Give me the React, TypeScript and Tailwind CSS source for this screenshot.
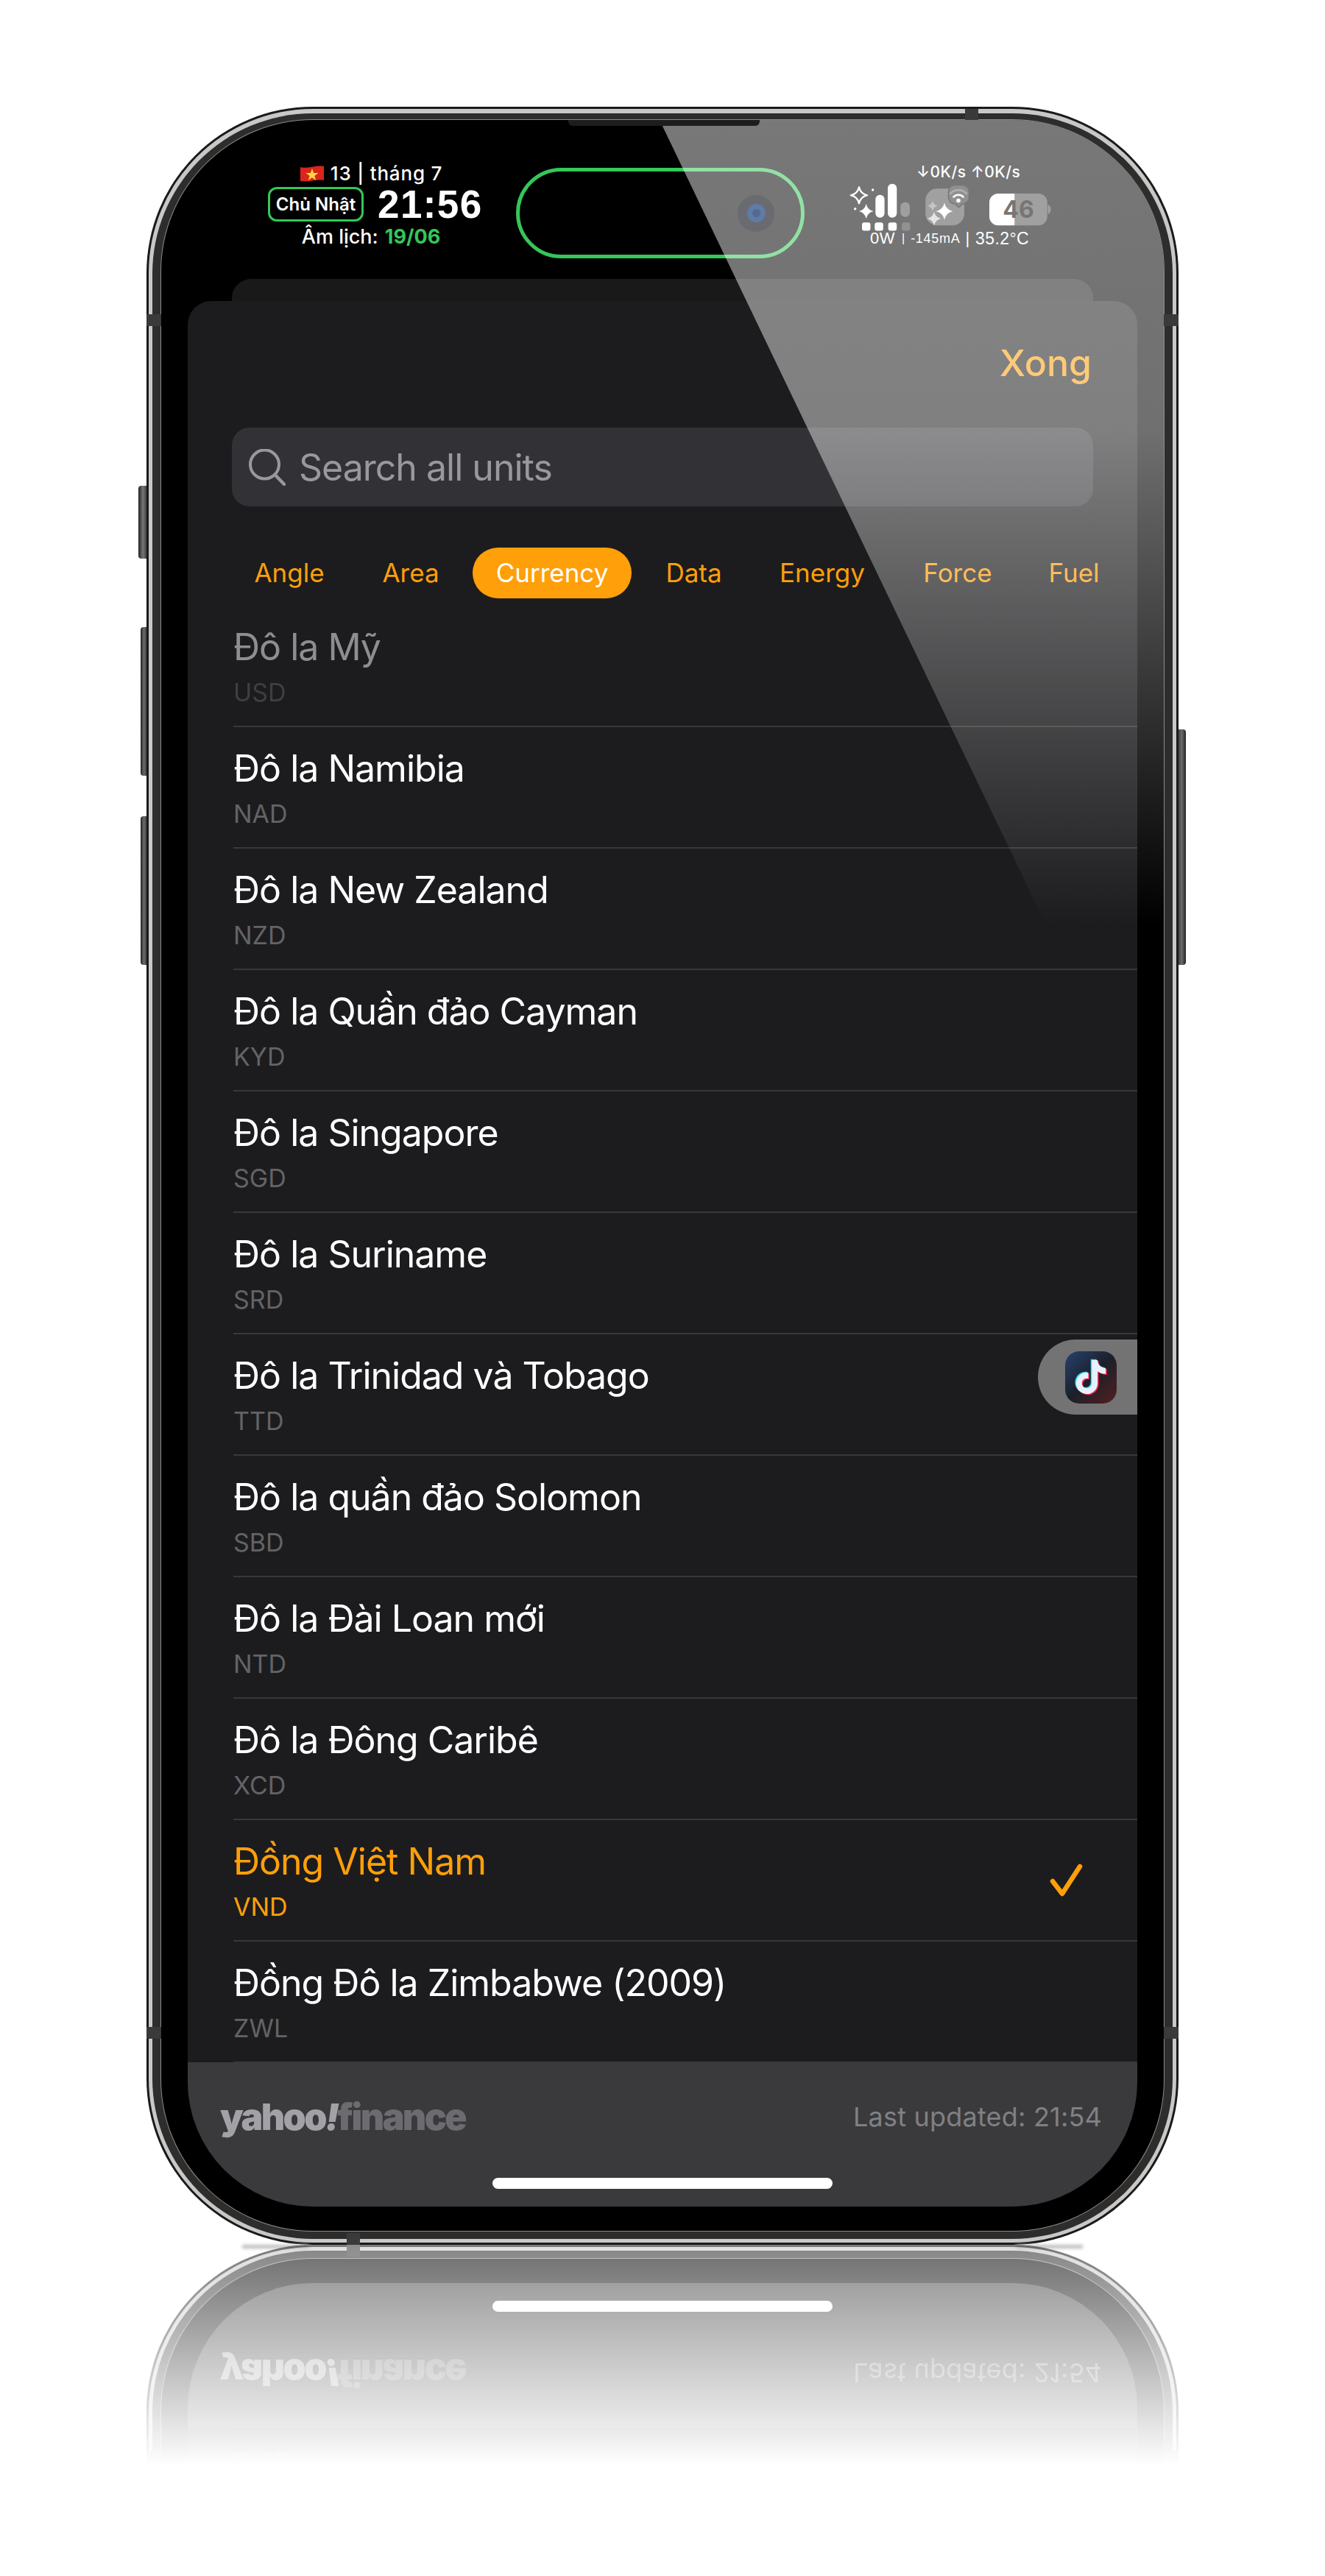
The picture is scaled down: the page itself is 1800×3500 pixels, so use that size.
const star = (cx: number, cy: number, r: number) => {
  const k = r * 0.18;
  return `M${cx} ${cy - r}Q${cx + k} ${cy - k} ${cx + r} ${cy}Q${cx + k} ${cy + k} ${cx} ${cy + r}Q${cx - k} ${cy + k} ${cx - r} ${cy}Q${cx - k} ${cy - k} ${cx} ${cy - r}Z`;
};

const tiktok =
  'M448,209.91a210.06,210.06,0,0,1-122.77-39.25V349.38A162.55,162.55,0,1,1,185,188.31V278.2a74.62,74.62,0,1,0,52.23,71.18V0l88,0a121.18,121.18,0,0,0,1.86,22.17h0A122.18,122.18,0,0,0,381,102.39a121.43,121.43,0,0,0,67,20.14Z';

const tabs = [
  { label: 'Angle', cls: 'w-[160px]' },
  { label: 'Area', cls: 'ml-[15px] w-[140px]' },
  { label: 'Currency', cls: 'ml-[14px] w-[216px] rounded-full bg-[#ff9f0a] text-white' },
  { label: 'Data', cls: 'ml-[17px] w-[135px]' },
  { label: 'Energy', cls: 'ml-[22px] w-[170px]' },
  { label: 'Force', cls: 'ml-[29px] w-[140px]' },
  { label: 'Fuel', cls: 'ml-[38px] w-[100px]' },
];

const units = [
  ['Đô la Mỹ', 'USD'],
  ['Đô la Namibia', 'NAD'],
  ['Đô la New Zealand', 'NZD'],
  ['Đô la Quần đảo Cayman', 'KYD'],
  ['Đô la Singapore', 'SGD'],
  ['Đô la Suriname', 'SRD'],
  ['Đô la Trinidad và Tobago', 'TTD'],
  ['Đô la quần đảo Solomon', 'SBD'],
  ['Đô la Đài Loan mới', 'NTD'],
  ['Đô la Đông Caribê', 'XCD'],
  ['Đồng Việt Nam', 'VND'],
  ['Đồng Đô la Zimbabwe (2009)', 'ZWL'],
];

function StatusIcons() {
  return (
    <svg width="280" height="66" viewBox="0 0 280 66" className="block">
      <path d={star(17, 17.3, 11)} fill="none" stroke="#fff" strokeWidth="2.4" strokeLinejoin="round" />
      <path d={star(26.7, 39, 10)} fill="#fff" />
      <circle cx="35.7" cy="10" r="1.7" fill="#fff" />
      <circle cx="11.7" cy="35.7" r="1.7" fill="#fff" />
      <rect x="39.3" y="16.7" width="12.3" height="31" rx="6" fill="#fff" />
      <rect x="56" y="1.7" width="12.3" height="46" rx="6" fill="#fff" />
      <rect x="73.3" y="26.7" width="12.7" height="20" rx="6" fill="#fff" fillOpacity=".3" />
      <rect x="21" y="54.3" width="11.5" height="11.3" rx="3" fill="#fff" />
      <rect x="38.3" y="54.3" width="11.5" height="11.3" rx="3" fill="#fff" />
      <rect x="56.7" y="54.3" width="11.5" height="11.3" rx="3" fill="#fff" />
      <rect x="75" y="54.3" width="11.5" height="11.3" rx="3" fill="#fff" fillOpacity=".2" />

      <rect x="107.3" y="8.3" width="52.7" height="50" rx="16" fill="#fff" fillOpacity=".31" />
      <path d={star(117, 31.7, 7)} fill="#fff" fillOpacity=".4" />
      <path d={star(133, 39, 11.5)} fill="#fff" />
      <path d={star(119, 49, 9.5)} fill="#fff" fillOpacity=".72" />
      <path
        d="M147 3.5h9c6.5 0 10.5 4 10.5 10.5v5c0 6-3.5 9.5-9 10.2l-5 4.6-5-4.6c-5.5-.7-9-4.2-9-10.2v-5c0-6.5 2-10.5 8.5-10.5z"
        fill="#303030"
        stroke="#000"
        strokeWidth="1.5"
      />
      <path d="M141 15a15 15 0 0 1 22 0" fill="none" stroke="#fff" strokeOpacity=".3" strokeWidth="2.6" strokeLinecap="round" />
      <path d="M145.5 19.5a9 9 0 0 1 13 0" fill="none" stroke="#fff" strokeWidth="2.6" strokeLinecap="round" />
      <circle cx="152" cy="24.5" r="2.8" fill="#fff" />

      <path d="M228.3 15H260.7A12 12 0 0 1 272.7 27V46.3A12 12 0 0 1 260.7 58.3H228.3Z" fill="#fff" fillOpacity=".31" />
      <path d="M206 15H228.3V58.3H206A12 12 0 0 1 194 46.3V27A12 12 0 0 1 206 15Z" fill="#fff" />
      <path d="M273.5 30c3 1 4 3.5 4 6.5s-1 5.5-4 6.5z" fill="#fff" fillOpacity=".3" />
      <text x="233.5" y="48" textAnchor="middle" fontSize="32" fontWeight="700" fill="#000" fontFamily="Inter, sans-serif">
        46
      </text>
    </svg>
  );
}

function StatusBar() {
  return (
    <div className="flex h-[216px] shrink-0 items-start pl-[145px] text-white">
      <div className="flex w-[290px] flex-col items-center pt-[59px]">
        <div className="flex h-[28px] items-center gap-[8px] pr-[10px] text-[26px] leading-[28px] font-medium tracking-[0.8px]">
          <svg width="34" height="24" viewBox="0 0 34 24">
            <path d="M1 3c10 3 20-3 32-1v19c-11-2-21 3-32 1z" fill="#da251d" />
            <path d="M17 5l2.1 6.1h6.4l-5.2 3.8 2 6.1-5.3-3.8-5.3 3.8 2-6.1-5.2-3.8h6.4z" fill="#ffd83a" />
          </svg>
          <span>13 | tháng 7</span>
        </div>
        <div className="mt-[4px] flex items-center gap-[19px]">
          <div className="flex h-[47px] w-[130px] items-center justify-center rounded-[12px] border-[3px] border-[#34c759] text-[24px] font-semibold whitespace-nowrap">
            Chủ Nhật
          </div>
          <div className="w-[141px] text-[53px] leading-[47px] font-bold tracking-[1.4px] [font-family:'Liberation_Sans',Arial,sans-serif]">21:56</div>
        </div>
        <div className="mt-[6px] flex h-[30px] items-center gap-[9px] pr-[10px] text-[27px] font-medium">
          <span>Âm lịch:</span>
          <span className="font-bold text-[#34c759]">19/06</span>
        </div>
      </div>
      <div className="mt-[65px] ml-[47px] flex h-[123px] w-[392px] items-center justify-end rounded-full border-[5px] border-[#34c759] bg-black pr-[36px]">
        <div className="relative z-10 flex h-[50px] w-[50px] items-center justify-center rounded-full bg-[#696b70]">
          <div className="h-[25px] w-[25px] rounded-full border-[7px] border-[#5f7ba8] bg-[#54698f]" />
        </div>
      </div>
      <div className="ml-[57px] flex w-[280px] flex-col pt-[57px]">
        <div className="pl-[95px] text-[21px] leading-[28px] font-medium tracking-[0.5px] whitespace-nowrap">↓0K/s ↑0K/s</div>
        <StatusIcons />
        <div className="mt-[-1px] flex items-center pl-[32px] leading-[22px] font-medium whitespace-nowrap [font-family:'Liberation_Sans',Arial,sans-serif]">
          <span className="text-[22px] tracking-[0.5px]">0W</span>
          <span className="ml-[9px] text-[16px]">|</span>
          <span className="ml-[8px] text-[18px] tracking-[0.7px]">-145mA</span>
          <span className="ml-[7px] text-[22px]">|</span>
          <span className="ml-[8px] text-[23px] tracking-[0.4px]">35.2°C</span>
        </div>
      </div>
    </div>
  );
}

function Footer() {
  return (
    <div className="flex h-[196px] shrink-0 flex-col bg-[#3a3a3c]">
      <div className="flex items-center justify-between pt-[44px] pr-[48px] pl-[44px]">
        <div className="text-[50px] leading-[60px] font-black tracking-[-2.6px]">
          <span className="text-[#a1a1a6]">yahoo</span>
          <span className="text-[#a1a1a6] italic">!</span>
          <span className="text-[#6c6c70]">finance</span>
        </div>
        <div className="text-[36px] leading-[60px] tracking-[0.2px] text-[#808084]">Last updated: 21:54</div>
      </div>
      <div className="mx-auto mt-[53px] h-[15px] w-[462px] rounded-full bg-white" />
    </div>
  );
}

function Card() {
  return (
    <div className="relative mr-[36px] mb-[33px] ml-[36px] flex min-h-0 flex-1 flex-col overflow-hidden rounded-t-[32px] rounded-b-[170px] bg-[#1c1c1e]">
      <div className="flex h-[172px] shrink-0 justify-end pt-[54px] pr-[62px] text-[50px] leading-[60px] font-medium text-[#ff9f0a]">Xong</div>
      <div className="mx-[60px] flex h-[107px] shrink-0 items-center rounded-[24px] bg-[#323236] pl-[23px] text-[#98989e]">
        <svg width="50" height="50" viewBox="0 0 50 50" className="shrink-0">
          <circle cx="21.5" cy="21" r="19.5" fill="none" stroke="currentColor" strokeWidth="4" />
          <path d="M35.5 35l12.5 13" fill="none" stroke="currentColor" strokeWidth="4.5" strokeLinecap="round" />
        </svg>
        <span className="ml-[18px] text-[50px] leading-[60px] tracking-[-1px]">Search all units</span>
      </div>
      <div className="mt-[56px] ml-[58px] flex h-[69px] shrink-0 text-[#ff9f0a]">
        {tabs.map((t) => (
          <div key={t.label} className={`flex items-center justify-center text-[35px] ${t.cls}`}>
            {t.label}
          </div>
        ))}
      </div>
      <div className="mt-[10px] min-h-0 flex-1 overflow-hidden pl-[62px]">
        {units.map(([name, code], i) => {
          const selected = code === 'VND';
          return (
            <div key={code} className="flex h-[165px] items-center justify-between border-b-2 border-[#38383a] pr-[73px]">
              <div className={i === 0 ? 'opacity-50' : ''}>
                <div className={`text-[50px] leading-[60px] tracking-[-1px] ${selected ? 'text-[#ff9f0a]' : 'text-white'}`}>{name}</div>
                <div className={`mt-[12px] text-[34px] leading-[40px] ${selected ? 'text-[#ff9f0a]' : 'text-[#636366]'}`}>{code}</div>
              </div>
              {selected && (
                <svg width="46" height="46" viewBox="0 0 46 46">
                  <path d="M4 24L17 41 41 4" fill="none" stroke="#ff9f0a" strokeWidth="6.5" strokeLinecap="round" strokeLinejoin="round" />
                </svg>
              )}
            </div>
          );
        })}
      </div>
      <Footer />
      {/* assistive touch tab */}
      <div className="absolute top-[1411px] right-0 flex h-[102px] w-[135px] items-center rounded-l-[51px] bg-[#737373] pl-[37px]">
        <div className="flex h-[71px] w-[70px] items-center justify-center rounded-[19px] bg-[linear-gradient(135deg,#27436f_0%,#1c1f2a_50%,#52201f_100%)]">
          <svg width="44" height="50" viewBox="-20 -20 488 552">
            <path d={tiktok} fill="#2fdcf0" transform="translate(-16,-12)" />
            <path d={tiktok} fill="#f2214f" transform="translate(16,14)" />
            <path d={tiktok} fill="#e6f1fb" />
          </svg>
        </div>
      </div>
    </div>
  );
}

function Phone() {
  return (
    <div className="relative h-[2905px] w-[1402px] rounded-[226px] bg-[#1a1a1a] p-[3px]">
      <div className="h-full rounded-[223px] bg-[#c8c8c8] px-[5px] pt-[6px] pb-[5px]">
        <div className="h-full rounded-[218px] bg-[#2e2d2c] px-[11px] pt-[8px] pb-[10px]">
          <div className="h-full rounded-[207px] bg-[#8c8c8c] p-[1px]">
            <div className="relative flex h-full flex-col overflow-hidden rounded-[206px] bg-black">
              <StatusBar />
              <div className="mx-[96px] h-[30px] shrink-0 rounded-t-[26px] bg-[#19191a]" />
              <Card />
              {/* diagonal glare */}
              <div className="pointer-events-none absolute inset-0 bg-[linear-gradient(to_bottom,rgba(255,255,255,0.47)_0px,rgba(255,255,255,0.44)_420px,rgba(255,255,255,0)_1095px)] [clip-path:polygon(677px_0px,1400px_0px,1400px_1100px,1205px_1100px)]" />
              <div className="absolute top-0 left-[553px] h-[8px] w-[260px] rounded-b-[6px] bg-[#1d1d1d]" />
            </div>
          </div>
        </div>
      </div>
      {/* antenna bands */}
      <div className="absolute top-[3px] left-[1112px] h-[15px] w-[18px] bg-[#3a3a3a]" />
      <div className="absolute bottom-0 left-[272px] h-[16px] w-[18px] bg-[#3a3a3a]" />
      <div className="absolute top-[282px] left-0 h-[16px] w-[20px] bg-[#3a3a3a]" />
      <div className="absolute top-[282px] right-0 h-[16px] w-[20px] bg-[#3a3a3a]" />
      <div className="absolute bottom-[280px] left-0 h-[16px] w-[20px] bg-[#3a3a3a]" />
      <div className="absolute right-0 bottom-[280px] h-[16px] w-[20px] bg-[#3a3a3a]" />
      {/* side buttons */}
      <div className="absolute top-[515px] -left-[11px] h-[99px] w-[11px] rounded-l-[4px] bg-[linear-gradient(to_right,#222,#777_55%,#444)]" />
      <div className="absolute top-[707px] -left-[8px] h-[202px] w-[8px] rounded-l-[4px] bg-[linear-gradient(to_right,#222,#6a6a6a_55%,#444)]" />
      <div className="absolute top-[964px] -left-[8px] h-[202px] w-[8px] rounded-l-[4px] bg-[linear-gradient(to_right,#222,#6a6a6a_55%,#444)]" />
      <div className="absolute top-[846px] -right-[10px] h-[320px] w-[10px] rounded-r-[4px] bg-[linear-gradient(to_left,#222,#6a6a6a_55%,#444)]" />
    </div>
  );
}

export default function App() {
  return (
    <div className="flex min-h-[3500px] flex-col items-center bg-white pt-[145px] [font-family:Inter,'Noto_Sans',sans-serif]">
      <Phone />
      {/* floor reflection */}
      <div className="relative w-[1402px]">
        <div className="absolute top-0 left-[130px] h-[5px] w-[90px] bg-[#bdbdbd] blur-[2px]" />
        <div className="absolute top-0 right-[130px] h-[5px] w-[90px] bg-[#bdbdbd] blur-[2px]" />
        <div className="h-[300px] overflow-hidden [mask-image:linear-gradient(to_bottom,rgba(0,0,0,0.58),rgba(0,0,0,0))]">
          <div className="-scale-y-100">
            <Phone />
          </div>
        </div>
      </div>
    </div>
  );
}
